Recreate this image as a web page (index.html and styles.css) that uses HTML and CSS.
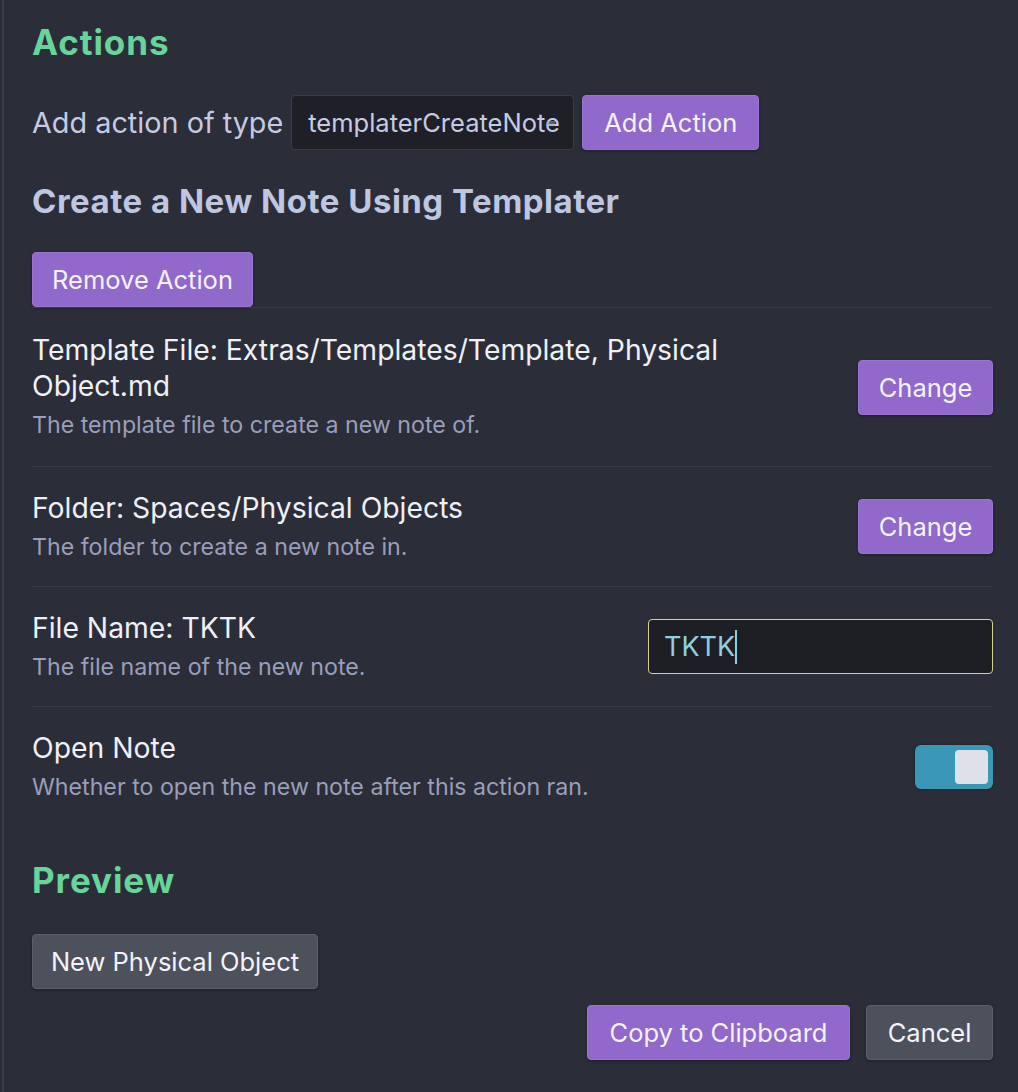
FILE: index.html
```html
<!DOCTYPE html>
<html>
<head>
<meta charset="utf-8">
<link rel="stylesheet" href="styles.css">
</head>
<body>
<div class="page">
  <h2 class="section-title">Actions</h2>
  <div class="add-row">
    <span class="add-label">Add action of type</span>
    <div class="select"><span class="select-text">templaterCreateNote</span><span class="select-arrow"></span></div>
    <button class="btn btn-cta btn-add">Add Action</button>
  </div>
  <h3 class="sub-title">Create a New Note Using Templater</h3>
  <div class="remove-row">
    <button class="btn btn-cta">Remove Action</button>
  </div>
  <div class="setting first">
    <div class="info">
      <div class="name">Template File: Extras/Templates/Template, Physical Object.md</div>
      <div class="desc">The template file to create a new note of.</div>
    </div>
    <div class="control"><button class="btn btn-cta btn-change">Change</button></div>
  </div>
  <div class="setting">
    <div class="info">
      <div class="name">Folder: Spaces/Physical Objects</div>
      <div class="desc">The folder to create a new note in.</div>
    </div>
    <div class="control"><button class="btn btn-cta btn-change">Change</button></div>
  </div>
  <div class="setting">
    <div class="info">
      <div class="name">File Name: TKTK</div>
      <div class="desc">The file name of the new note.</div>
    </div>
    <div class="control"><div class="text-input"><span class="input-text">TKTK</span><span class="caret"></span></div></div>
  </div>
  <div class="setting">
    <div class="info">
      <div class="name">Open Note</div>
      <div class="desc">Whether to open the new note after this action ran.</div>
    </div>
    <div class="control"><div class="toggle"><span class="knob"></span></div></div>
  </div>
  <h2 class="section-title preview-title">Preview</h2>
  <div class="preview-row">
    <button class="btn btn-gray">New Physical Object</button>
  </div>
  <div class="footer">
    <button class="btn btn-cta btn-copy">Copy to Clipboard</button>
    <button class="btn btn-gray btn-cancel">Cancel</button>
  </div>
</div>
</body>
</html>
```
FILE: styles.css
```css
html, body {
  margin: 0;
  padding: 0;
  background: #2b2d38;
}
body {
  font-family: Inter, "Noto Sans", sans-serif;
  width: 1018px;
  height: 1092px;
  overflow: hidden;
}
.page {
  box-sizing: border-box;
  height: 1092px;
  margin-left: 2px;
  border-left: 2px solid #3a3c48;
  padding: 0 25px 0 28px;
  display: flex;
  flex-direction: column;
}
.section-title {
  margin: 0;
  color: #68d39b;
  font-size: 35px;
  letter-spacing: 0.9px;
  font-weight: 700;
  line-height: 40px;
  padding-top: 22px;
}
.add-row {
  display: flex;
  align-items: center;
  gap: 8px;
  margin-top: 33px;
  height: 55px;
}
.add-label {
  color: #c5cbe2;
  font-size: 28.8px;
}
.select {
  position: relative;
  box-sizing: border-box;
  width: 283px;
  height: 55px;
  background: #1f2027;
  border: 1px solid #3a3c46;
  border-radius: 4px;
  padding: 0 16px;
  display: flex;
  align-items: center;
  overflow: hidden;
  color: #c5cbe2;
  font-size: 25.5px;
  white-space: nowrap;
}
.select-arrow {
  position: absolute;
  right: 18px;
  top: 25px;
  width: 8px;
  height: 5px;
  background: #9a9fb5;
  opacity: 0.5;
}
.btn {
  font-family: inherit;
  box-sizing: border-box;
  height: 55px;
  border-radius: 4px;
  font-size: 25.5px;
  color: #f4f2fa;
  padding: 0;
  border: 1px solid transparent;
  box-shadow: 0 1px 3px rgba(0,0,0,0.35);
  cursor: pointer;
}
.btn-cta {
  background: #9169cb;
  border-color: #9a74d2;
}
.btn-gray {
  background: #4c515c;
  border-color: #5b606b;
}
.btn-add {
  width: 177px;
}
.sub-title {
  margin: 0;
  margin-top: 31px;
  color: #bec6e0;
  font-size: 33px;
  letter-spacing: 0.5px;
  font-weight: 700;
  line-height: 40px;
}
.remove-row {
  margin-top: 31px;
  display: flex;
}
.remove-row .btn {
  width: 221px;
}
.setting {
  display: flex;
  align-items: center;
  border-top: 1px solid #383a46;
  padding: 22px 0;
  min-height: 120px;
  box-sizing: border-box;
}
.setting.first {
  min-height: 159px;
}
.info {
  flex: 1 1 auto;
  max-width: 720px;
}
.name {
  color: #eef0f6;
  font-size: 28.3px;
  line-height: 36px;
}
.desc {
  color: #9a9fba;
  font-size: 23.2px;
  line-height: 34px;
  margin-top: 4px;
}
.control {
  flex: 1 1 auto;
  display: flex;
  justify-content: flex-end;
}
.btn-change {
  width: 135px;
}
.text-input {
  box-sizing: border-box;
  width: 345px;
  height: 55px;
  background: #1e1f25;
  border: 1px solid #d6d28a;
  border-radius: 4px;
  display: flex;
  align-items: center;
  padding: 0 15px;
}
.input-text {
  color: #8fcfe0;
  font-size: 27px;
}
.caret {
  display: inline-block;
  width: 2px;
  height: 34px;
  background: #8fcfe0;
}
.toggle {
  box-sizing: border-box;
  width: 78px;
  height: 44px;
  border-radius: 6px;
  background: #3a97b5;
  display: flex;
  justify-content: flex-end;
  align-items: center;
  padding: 0 5px;
  box-shadow: 0 0 3px rgba(0,0,0,0.4);
}
.knob {
  width: 33px;
  height: 34px;
  background: #dfe1ea;
  border-radius: 4px;
}
.preview-title {
  padding-top: 34px;
}
.preview-row {
  margin-top: 34px;
  display: flex;
}
.preview-row .btn {
  width: 286px;
}
.footer {
  display: flex;
  justify-content: flex-end;
  gap: 16px;
  margin-top: 16px;
}
.btn-copy {
  width: 263px;
}
.btn-cancel {
  width: 127px;
}
```
